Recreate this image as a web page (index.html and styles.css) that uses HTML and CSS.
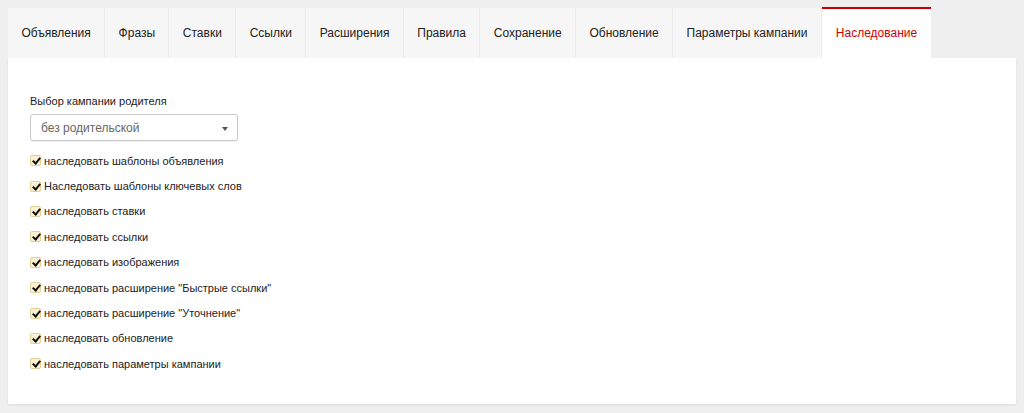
FILE: index.html
```html
<!DOCTYPE html>
<html lang="ru">
<head>
    <meta charset="UTF-8">
    <title>Наследование</title>
    <link rel="stylesheet" href="styles.css">
</head>
<body>
    <div class="tabs">
        <div class="tab">Объявления</div>
        <div class="tab">Фразы</div>
        <div class="tab">Ставки</div>
        <div class="tab">Ссылки</div>
        <div class="tab">Расширения</div>
        <div class="tab">Правила</div>
        <div class="tab">Сохранение</div>
        <div class="tab">Обновление</div>
        <div class="tab">Параметры кампании</div>
        <div class="tab active">Наследование</div>
    </div>

    <div class="panel">
        <div class="field-label">Выбор кампании родителя</div>
        <div class="select">
            <span>без родительской</span>
            <span class="arrow"></span>
        </div>

        <ul class="checks">
            <li><span class="box"></span>наследовать шаблоны объявления</li>
            <li><span class="box"></span>Наследовать шаблоны ключевых слов</li>
            <li><span class="box"></span>наследовать ставки</li>
            <li><span class="box"></span>наследовать ссылки</li>
            <li><span class="box"></span>наследовать изображения</li>
            <li><span class="box"></span>наследовать расширение "Быстрые ссылки"</li>
            <li><span class="box"></span>наследовать расширение "Уточнение"</li>
            <li><span class="box"></span>наследовать обновление</li>
            <li><span class="box"></span>наследовать параметры кампании</li>
        </ul>
    </div>
</body>
</html>
```

FILE: styles.css
```css
body {
    margin: 0;
    padding: 8px;
    background-color: #efefef;
    font-family: "Liberation Sans", Arial, sans-serif;
    color: #222;
}
.tabs {
    display: flex;
}
.tab {
    height: 50px;
    line-height: 50px;
    padding: 0 13.4px;
    font-size: 12px;
    background-color: #f6f6f6;
    border-right: 1px solid #ebebeb;
    color: #222;
    box-sizing: border-box;
}
.tab.active {
    background-color: #fff;
    color: #cc0000;
    border-top: 2px solid #cc0000;
    border-right: none;
    line-height: 48px;
    margin-top: -1px;
    height: 51px;
    padding: 0 14px;
}
.panel {
    width: 1008px;
    height: 346px;
    box-sizing: border-box;
    background-color: #fff;
    padding: 36px 22px 0;
    box-shadow: 0 1px 2px rgba(0,0,0,0.08);
}
.field-label {
    font-size: 11px;
    line-height: 14px;
    margin-bottom: 6px;
}
.select {
    width: 208px;
    height: 27px;
    box-sizing: border-box;
    border: 1px solid #c8c8c8;
    border-radius: 3px;
    display: flex;
    align-items: center;
    justify-content: space-between;
    padding: 0 9px 0 10px;
    font-size: 12px;
    color: #666;
    box-shadow: 0 1px 1px rgba(0,0,0,0.06);
}
.arrow {
    width: 0;
    height: 0;
    border-left: 3.5px solid transparent;
    border-right: 3.5px solid transparent;
    border-top: 4px solid #555;
    margin-top: 2px;
}
.checks {
    list-style: none;
    margin: 7px 0 0;
    padding: 0;
}
.checks li {
    display: flex;
    align-items: center;
    height: 25.4px;
    font-size: 11px;
}
.box {
    width: 11px;
    height: 11px;
    box-sizing: border-box;
    border: 1px solid #e3cf9a;
    border-radius: 2px;
    background-color: #fbf0d2;
    margin-right: 3px;
    position: relative;
}
.box::after {
    content: "";
    position: absolute;
    left: 3px;
    top: 0px;
    width: 3px;
    height: 6px;
    border-right: 2px solid #111;
    border-bottom: 2px solid #111;
    transform: rotate(40deg);
}
```
